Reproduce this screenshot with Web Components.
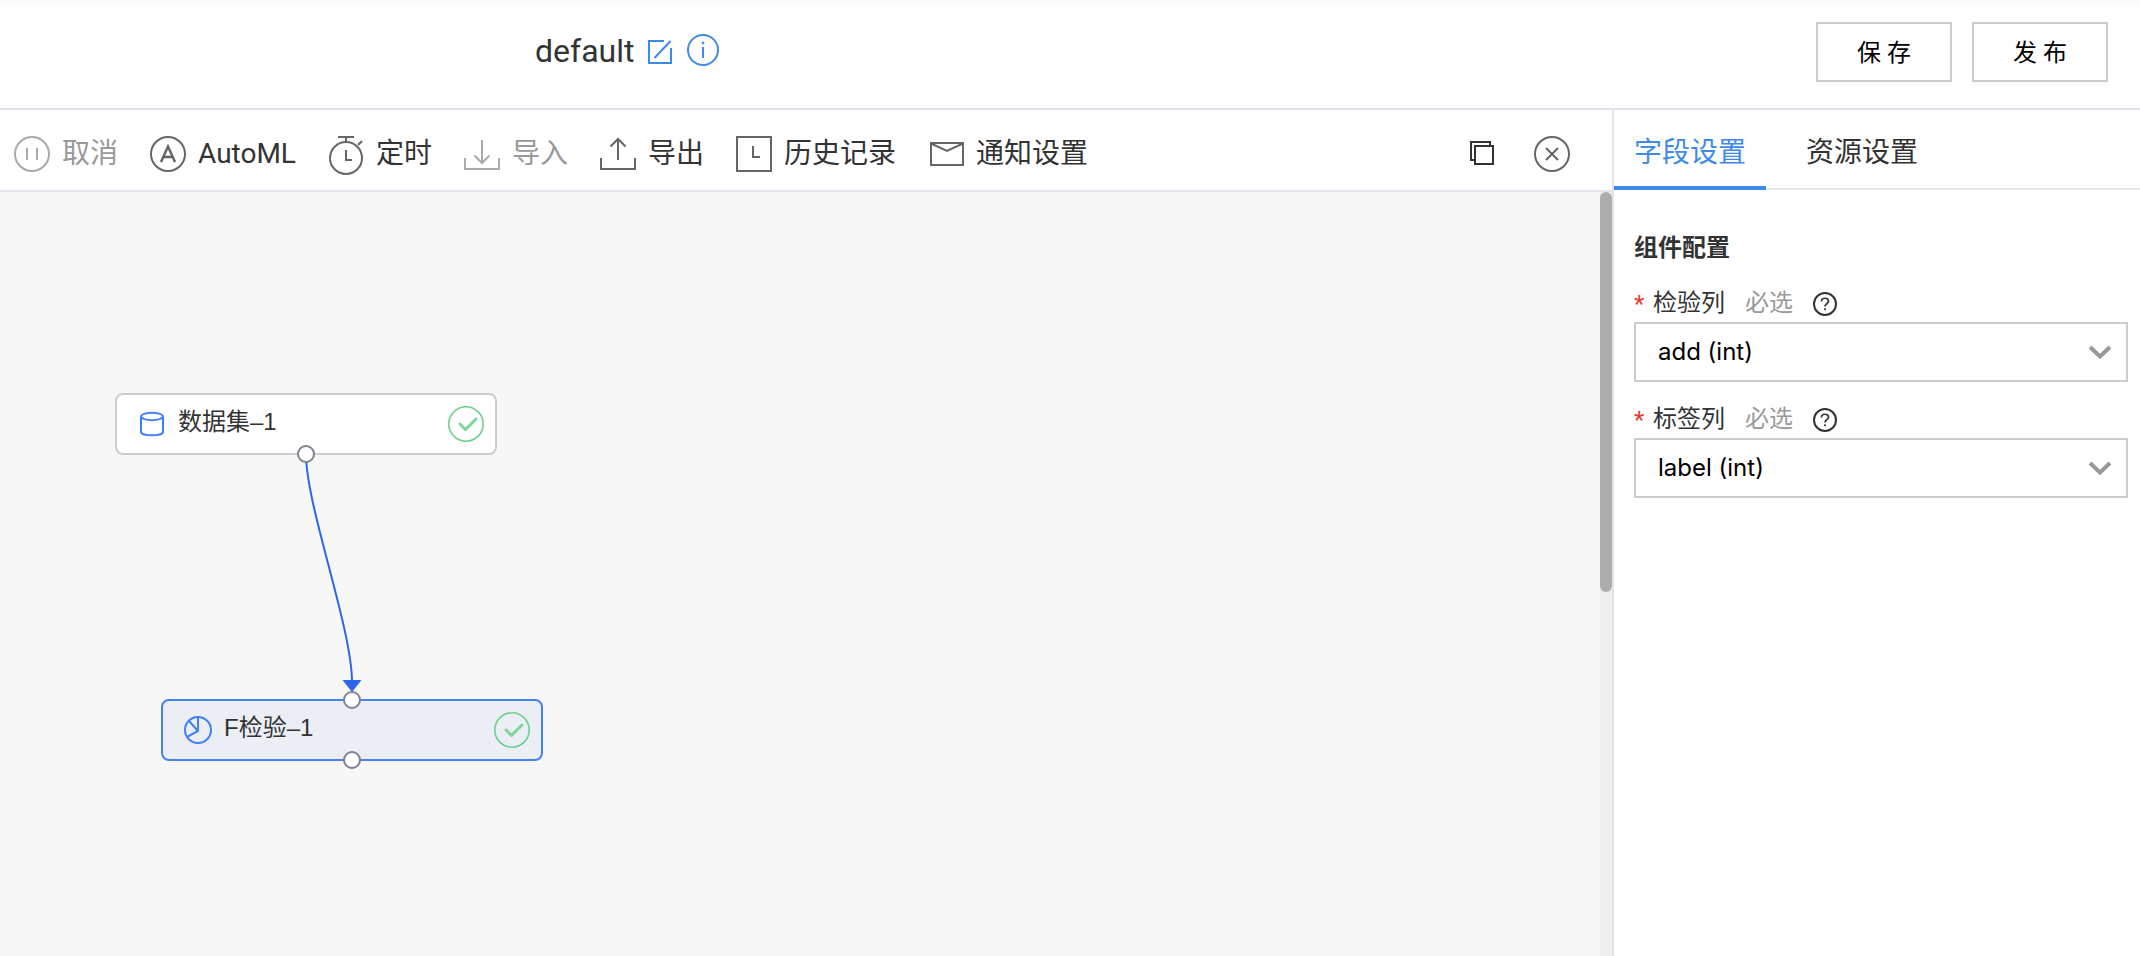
<!DOCTYPE html>
<html lang="zh-CN">
<head>
<meta charset="utf-8">
<title>default</title>
<style>
html, body { margin: 0; height: 100%; }
body { font-family: Roboto, "Noto Sans CJK SC", sans-serif; color: #333; background: #fff; }
</style>
</head>
<body>
<flow-app></flow-app>
<script>
const ICONS = {
  edit: [24, '<path d="M16 1H1v22h22V8M6.500 18L22.500 1"/>'],
  info: [32, '<circle cx="16" cy="16" r="15"/><path d="M16 13v11"/><circle cx="16" cy="9" r="1" fill="currentColor" stroke-width="1"/>'],
  pause: [36, '<circle cx="18" cy="18" r="17"/><path d="M13 12v12M23 12v12"/>'],
  auto: [36, '<circle cx="18" cy="18" r="17"/><path d="M11 26L18 10.500 25 26M13.500 21h9" stroke-width="2.500"/>'],
  timer: [36, '<circle cx="18" cy="22" r="16"/><path d="M10 1h16M18 1v5M30 9l4-4M18 14v10h6"/>'],
  import: [36, '<path d="M1 22v11h34V22M18 4v23M10.500 19.500L18 27l7.500-7.500"/>'],
  export: [36, '<path d="M1 22v11h34V22M18 24V3M10.500 10.500L18 3l7.500 7.500"/>'],
  history: [36, '<path d="M1 1h34v34H1zM17 10v11h7"/>'],
  mail: [36, '<path d="M3 7h32v22H3zM3 7.500l16 7.500 16-7.500"/>'],
  copy: [36, '<path d="M24 9V6H5v18h4M9 10h18v18H9z"/>'],
  close: [36, '<circle cx="18" cy="18" r="17"/><path d="M12 12l12 12M24 12L12 24"/>'],
  done: [36, '<circle cx="18" cy="18" r="17.200" stroke="#6fcf8c" stroke-width="1.600"/><path d="M12 18l5.500 5.500L28 13" stroke="#7fd49a" stroke-width="3" stroke-linecap="round" stroke-linejoin="round"/>'],
  data: [28, '<ellipse cx="14" cy="6.500" rx="11" ry="3.700"/><path d="M3 6.500V22c0 2 5 3.300 11 3.300S25 24 25 22V6.500"/>'],
  test: [28, '<circle cx="14" cy="14" r="13"/><path d="M14 1v14L3 21M14 15L5 5"/>'],
  help: [24, '<circle cx="12" cy="12" r="11"/><path d="M8.500 9.500C8.500 5.200 15.500 5.200 15.500 9.300 15.500 11.500 12 11.500 12 14.500M12 16.300v2" stroke-width="1.700"/>'],
  down: [24, '<path d="M2 7l10 9.500L22 7" stroke-width="4"/>']
};

const define = (name, html, setup) => {
  const template = document.createElement('template');
  template.innerHTML = `<style>*{box-sizing:border-box}</style>${html}`;
  customElements.define(name, class extends HTMLElement {
    connectedCallback() {
      if (this.shadowRoot) return;
      this.attachShadow({ mode: 'open' }).append(template.content.cloneNode(true));
      if (setup) setup(this, this.shadowRoot);
    }
  });
};

define('ui-icon', `<style>:host{display:block;flex:none}svg{display:block;overflow:visible}</style>`, (el, root) => {
  const [size, body] = ICONS[el.getAttribute('name')];
  root.innerHTML += `<svg width="${size}" height="${size}" viewBox="0 0 ${size} ${size}" fill="none" stroke="currentColor" stroke-width="2" aria-hidden="true">${body}</svg>`;
});

define('tool-button', `<style>
:host{display:block;flex:none}
button{display:flex;align-items:center;gap:12px;padding:0;border:0;background:none;color:#333;font:inherit;font-size:28px;line-height:36px;white-space:nowrap}
ui-icon{color:#666}
span:empty{display:none}
button:disabled{color:#999}
button:disabled ui-icon{color:#aaa}
:host([strong]) ui-icon{color:#333}
</style><button type="button"><span></span></button>`, (el, root) => {
  const button = root.querySelector('button');
  const icon = document.createElement('ui-icon');
  icon.setAttribute('name', el.getAttribute('icon'));
  button.prepend(icon);
  root.querySelector('span').textContent = el.getAttribute('text') || '';
  if (el.title) button.setAttribute('aria-label', el.title);
  button.disabled = el.hasAttribute('disabled');
});

define('push-button', `<style>
:host{display:block}
button{display:block;width:136px;height:60px;padding:0 0 4px;border:2px solid #ccc;background:#fff;color:#000;font:inherit;font-size:24px;box-shadow:0 4px 0 #fafafa}
</style><button type="button"><slot></slot></button>`);

define('app-header', `<style>
:host{display:flex;flex:none;align-items:center;justify-content:space-between;height:110px;padding:0 32px 4px 25%;border-bottom:2px solid #e1e3ea;background:linear-gradient(#f9f9f9,#fff 12px);box-sizing:border-box}
.title,.actions{display:flex;align-items:center}
h1{margin:0 14px 2px 0;font-size:32px;line-height:40px;font-weight:400}
.actions{gap:20px}
button{display:block;padding:0;border:0;background:none;color:#3f8ae8}
.info{margin-left:15px;padding-bottom:4px}
</style>
<div class="title"><h1>default</h1><button type="button" aria-label="编辑"><ui-icon name="edit"></ui-icon></button><button type="button" class="info" aria-label="信息"><ui-icon name="info"></ui-icon></button></div>
<div class="actions"><push-button>保 存</push-button><push-button>发 布</push-button></div>`);

define('tool-bar', `<style>
:host{display:flex;flex:none;align-items:center;gap:32px;height:82px;padding:8px 42px 0 14px;border-bottom:2px solid #e1e5ec;box-sizing:border-box}
.space{flex:1}
</style>
<tool-button icon="pause" text="取消" disabled></tool-button>
<tool-button icon="auto" text="AutoML"></tool-button>
<tool-button icon="timer" text="定时"></tool-button>
<tool-button icon="import" text="导入" disabled></tool-button>
<tool-button icon="export" text="导出"></tool-button>
<tool-button icon="history" text="历史记录"></tool-button>
<tool-button icon="mail" text="通知设置"></tool-button>
<div class="space"></div>
<tool-button icon="copy" title="复制" strong></tool-button>
<tool-button icon="close" title="关闭"></tool-button>`);

define('flow-node', `<style>
:host{position:absolute;display:flex;align-items:center;width:382px;height:62px;padding:0 11px 0 21px;border:2px solid #ccc;border-radius:8px;background:#fff;box-sizing:border-box;font-family:"Liberation Sans","Noto Sans CJK SC",sans-serif;font-size:24px;line-height:32px}
:host([selected]){border-color:#4382f0;background:#ebeef5}
.kind{color:#4080f5;margin-right:12px}
.name{flex:1;padding-bottom:4px}
.port{position:absolute;left:50%;width:18px;height:18px;border:2px solid #7d828e;border-radius:50%;background:#fff;transform:translate(-50%,-50%)}
.in{top:-1px}.out{top:59px}
:host(:not([selected])) .in{display:none}
</style><span class="kind"></span><span class="name"><slot></slot></span><ui-icon name="done"></ui-icon><i class="port in"></i><i class="port out"></i>`, (el, root) => {
  root.querySelector('.kind').innerHTML = `<ui-icon name="${el.getAttribute('icon')}"></ui-icon>`;
});

define('flow-canvas', `<style>
:host{display:flex;flex:1;min-height:0;background:#f7f7f7}
.board{position:relative;flex:1;overflow:hidden}
.edge{position:absolute;left:0;top:0;width:100%;height:100%}
.one{left:115px;top:201px}
.two{left:161px;top:507px}
.track{width:12px;background:#efefef}
.thumb{height:52.4%;border-radius:6px;background:#adadad}
</style>
<div class="board">
<svg class="edge" aria-hidden="true"><path d="M306 262C306 314 352 436 352 490" fill="none" stroke="#2f66e8" stroke-width="2"/><path d="M342.500 488h19L352 500z" fill="#2f66e8"/></svg>
<flow-node class="one" icon="data">数据集–1</flow-node>
<flow-node class="two" icon="test" selected>F检验–1</flow-node>
</div>
<div class="track"><div class="thumb"></div></div>`);

define('field-select', `<style>
:host{display:block}
.label{display:flex;align-items:center;height:36px;font-size:24px;line-height:32px}
.star{width:19px;color:#e5392f}
label,.need{padding-bottom:2px}
.need{margin:0 20px;color:#999}
.box{display:grid;align-items:center}
select,.arrow{grid-area:1/1}
select{appearance:none;width:100%;height:60px;margin:0;padding:0 60px 2px 22px;border:2px solid #ccc;border-radius:0;background:#fff;color:#000;font-family:Inter,"Noto Sans CJK SC",sans-serif;font-size:24px}
.arrow{justify-self:end;margin-right:16px;color:#999;pointer-events:none}
</style>
<div class="label"><span class="star">*</span><label for="field"></label><span class="need">必选</span><ui-icon name="help"></ui-icon></div>
<div class="box"><select id="field"><option></option></select><ui-icon class="arrow" name="down"></ui-icon></div>`, (el, root) => {
  root.querySelector('label').textContent = el.getAttribute('label');
  root.querySelector('option').textContent = el.getAttribute('value');
});

define('side-panel', `<style>
:host{display:block;width:528px;flex:none;border-left:2px solid #e1e5ec;box-sizing:border-box}
nav{display:flex;gap:20px;height:80px;border-bottom:2px solid #e8e8e8}
nav button{height:80px;padding:4px 20px 0;border:0;border-bottom:4px solid transparent;background:none;color:#333;font:inherit;font-size:28px}
nav .on{color:#3f8ae8;border-color:#3f8ae8}
section{display:flex;flex-direction:column;gap:20px;padding:40px 12px 0 20px}
h2{margin:0;font-size:24px;line-height:36px;font-weight:700}
</style>
<nav role="tablist"><button type="button" role="tab" aria-selected="true" class="on">字段设置</button><button type="button" role="tab" aria-selected="false">资源设置</button></nav>
<section><h2>组件配置</h2>
<field-select label="检验列" value="add (int)"></field-select>
<field-select label="标签列" value="label (int)"></field-select></section>`);

define('flow-app', `<style>
:host{display:flex;flex-direction:column;height:100vh}
.body{display:flex;flex:1;min-height:0}
main{display:flex;flex-direction:column;flex:1;min-width:0}
</style>
<app-header></app-header>
<div class="body"><main><tool-bar></tool-bar><flow-canvas></flow-canvas></main><side-panel></side-panel></div>`);
</script>
</body>
</html>
